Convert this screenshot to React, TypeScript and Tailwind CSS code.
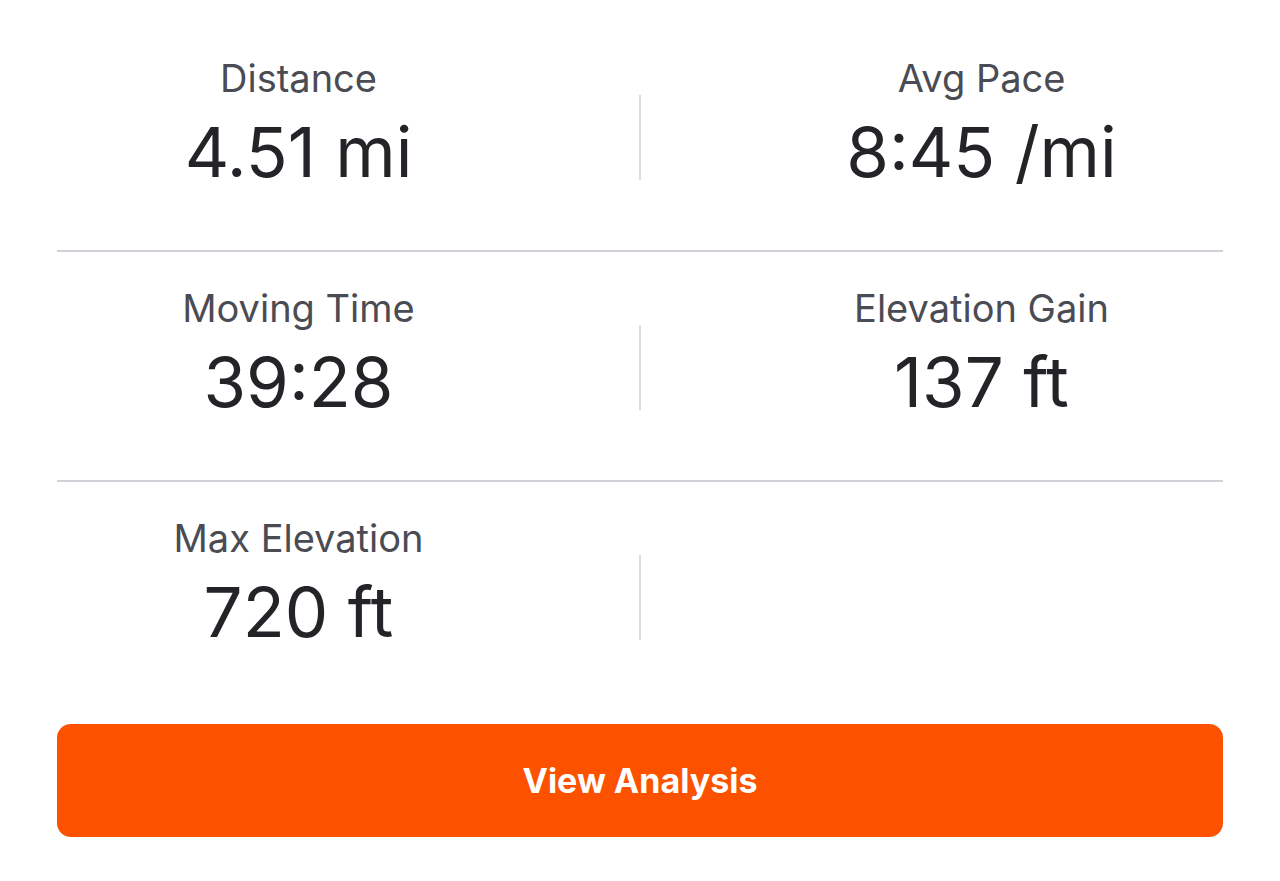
const stats: { label: string; value: string }[][] = [
  [
    { label: 'Distance', value: '4.51 mi' },
    { label: 'Avg Pace', value: '8:45 /mi' },
  ],
  [
    { label: 'Moving Time', value: '39:28' },
    { label: 'Elevation Gain', value: '137 ft' },
  ],
  [
    { label: 'Max Elevation', value: '720 ft' },
    { label: '', value: '' },
  ],
];

function Stat({ label, value }: { label: string; value: string }) {
  return (
    <div className="flex flex-col items-center">
      <span className="text-[38px] leading-none text-[#4b4b53]">{label}</span>
      <span className="mt-[21px] text-[69px] leading-none text-[#242428]">{value}</span>
    </div>
  );
}

export default function App() {
  return (
    <div
      className="h-[881px] w-full bg-white px-[57px] pt-[22px]"
      style={{ fontFamily: 'Inter, "Noto Sans", sans-serif' }}
    >
      {stats.map((row, i) => (
        <div
          key={i}
          className={`grid h-[230px] grid-cols-[1fr_200px_1fr] pt-[37px] ${
            i < stats.length - 1 ? 'border-b-2 border-[#d0d0d8]' : ''
          }`}
        >
          {row[0].label ? <Stat {...row[0]} /> : <div />}
          <div className="flex justify-center pt-[36px]">
            <div className="h-[85px] w-[2px] bg-[#dcdcdf]" />
          </div>
          {row[1].label ? <Stat {...row[1]} /> : <div />}
        </div>
      ))}

      <button className="mt-[12px] flex h-[113px] w-full items-center justify-center rounded-[14px] bg-[#fc5200] text-[34px] font-bold text-white">
        View Analysis
      </button>
    </div>
  );
}
